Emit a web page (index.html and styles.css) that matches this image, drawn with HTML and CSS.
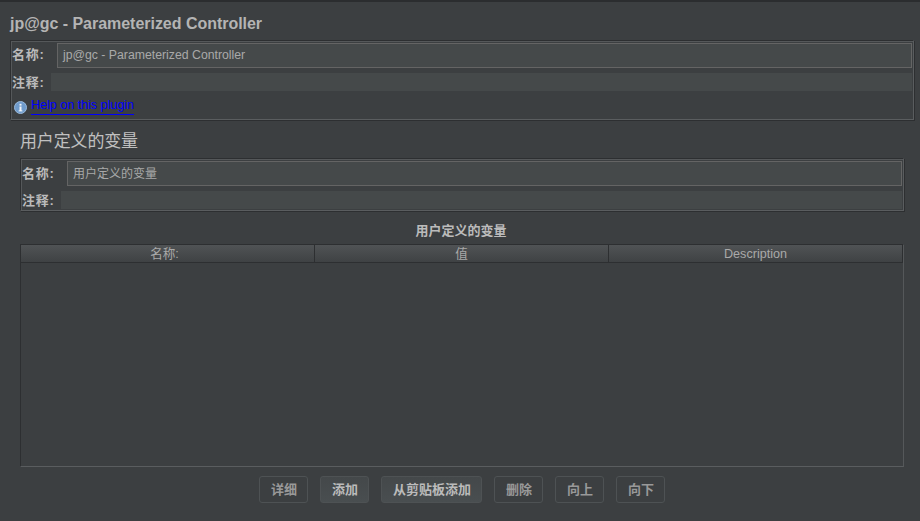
FILE: index.html
```html
<!DOCTYPE html>
<html lang="zh">
<head>
<meta charset="utf-8">
<title>jp@gc - Parameterized Controller</title>
<link rel="stylesheet" href="styles.css">
</head>
<body>
<div class="app">
  <h1 class="title">jp@gc - Parameterized Controller</h1>
  <section class="panel panel-top">
    <div class="row row-name">
      <span class="label">名称:</span>
      <div class="field field-name field-latin">jp@gc - Parameterized Controller</div>
    </div>
    <div class="row row-comment">
      <span class="label">注释:</span>
      <div class="field field-comment"></div>
    </div>
    <div class="help">
      <svg class="info" width="13" height="13" viewBox="0 0 13 13"><circle cx="6.5" cy="6.5" r="6" fill="#6f9bcb" stroke="#9bbbdc" stroke-width="1"/><rect x="5.5" y="5.5" width="2" height="4.5" fill="#f1f4f8"/><rect x="5.5" y="2.8" width="2" height="1.8" fill="#f1f4f8"/><rect x="4.6" y="9.4" width="3.8" height="1" fill="#f1f4f8"/></svg>
      <a class="help-link" href="#">Help on this plugin</a>
    </div>
  </section>
  <div class="content">
    <h2 class="subtitle">用户定义的变量</h2>
    <section class="panel panel-inner">
      <div class="row row-name">
        <span class="label">名称:</span>
        <div class="field field-name">用户定义的变量</div>
      </div>
      <div class="row row-comment">
        <span class="label">注释:</span>
        <div class="field field-comment"></div>
      </div>
    </section>
    <h3 class="table-title">用户定义的变量</h3>
    <div class="table">
      <div class="thead">
        <div class="th th-name">名称:</div>
        <div class="th">值</div>
        <div class="th">Description</div>
      </div>
    </div>
    <div class="buttons">
      <button class="btn">详细</button>
      <button class="btn btn-on">添加</button>
      <button class="btn btn-on">从剪贴板添加</button>
      <button class="btn">删除</button>
      <button class="btn">向上</button>
      <button class="btn">向下</button>
    </div>
  </div>
</div>
</body>
</html>
```
FILE: styles.css
```css
* { box-sizing: border-box; }
html, body { margin: 0; padding: 0; }
body {
  width: 920px;
  height: 521px;
  overflow: hidden;
  background: #3c3f41;
  font-family: "Liberation Sans", "Noto Sans CJK SC", sans-serif;
  color: #bbbbbb;
}
.app {
  height: 521px;
  border-top: 2px solid #2b2d2f;
  padding: 0 6px 0 10px;
  display: flex;
  flex-direction: column;
}
.title {
  margin: 0;
  height: 38px;
  padding-top: 13px;
  font-size: 16px;
  line-height: 18px;
  font-weight: bold;
  letter-spacing: -0.03px;
  color: #b4b4b4;
}
.panel {
  border: 1px solid #5a5d5f;
  border-top-color: #2d2f31;
  border-left-color: #2d2f31;
  box-shadow: inset 1px 1px 0 #55585a, 1px 1px 0 #2d2f31;
  padding: 2px 1px 1px 1px;
}
.panel-top { height: 80px; width: 904px; }
.row { display: flex; align-items: stretch; }
.row-name { height: 25px; }
.row-comment { height: 18px; margin-top: 5px; }
.label {
  font-size: 13px;
  font-weight: bold;
  line-height: 24px;
  letter-spacing: 0.7px;
  color: #bbbbbb;
  white-space: nowrap;
}
.row-comment .label { line-height: 19px; width: 39px; }
.row-name .label { width: 45px; }
.panel-inner .row-name .label { line-height: 25px; }
.panel-inner .row-comment .label { line-height: 20px; }
.field {
  flex: 1;
  background: #45494a;
  font-size: 12px;
  color: #a9a9a9;
}
.field-name {
  border: 1px solid #646464;
  line-height: 23px;
  padding-left: 5px;
}
.panel-inner .field-name { line-height: 24px; }
.field-latin { font-size: 12.27px; }
.help {
  display: flex;
  align-items: flex-start;
  height: 22px;
  margin-top: 5px;
  padding-left: 2px;
  position: relative;
}
.info { margin-top: 5px; margin-right: 4px; }
.help-link {
  font-size: 12.5px;
  line-height: 14px;
  margin-top: 2px;
  color: #0000ff;
  text-decoration: none;
  border-bottom: 1px solid #0000ff;
  height: 17px;
}
.content {
  flex: 1;
  padding: 0 10px;
  display: flex;
  flex-direction: column;
}
.subtitle {
  margin: 0;
  height: 38px;
  padding-top: 11px;
  font-size: 17px;
  line-height: 22px;
  font-weight: normal;
  letter-spacing: -0.15px;
  color: #c0c0c0;
}
.panel-inner { height: 53px; width: 884px; }
.table-title {
  margin: 0;
  height: 33px;
  padding: 13px 2px 0 0;
  text-align: center;
  font-size: 13px;
  line-height: 14px;
  font-weight: bold;
  color: #bbbbbb;
}
.table {
  width: 884px;
  height: 223px;
  border: 1px solid #2d2f31;
  border-right-color: #55585a;
  border-bottom-color: #5a5d5f;
}
.thead {
  display: grid;
  grid-template-columns: repeat(3, 1fr);
  height: 18px;
  background: linear-gradient(#505355, #3f4244);
  border-bottom: 1px solid #2d2f31;
}
.th {
  font-size: 12.6px;
  line-height: 18px;
  text-align: center;
  color: #a9a9a9;
  border-right: 1px solid #2d2f31;
}
.th-name { padding-right: 6px; }
.buttons {
  display: flex;
  justify-content: center;
  gap: 12px;
  margin-top: 9px;
}
.btn {
  height: 27px;
  padding: 0 10px 0 11px;
  background: #3c3f41;
  border: 1px solid #4e5254;
  border-radius: 3px;
  color: #999999;
  font-family: inherit;
  font-size: 13px;
  font-weight: bold;
  line-height: 25px;
}
.btn-on {
  background: linear-gradient(#44484a, #494e50);
  color: #bbbbbb;
}
```
